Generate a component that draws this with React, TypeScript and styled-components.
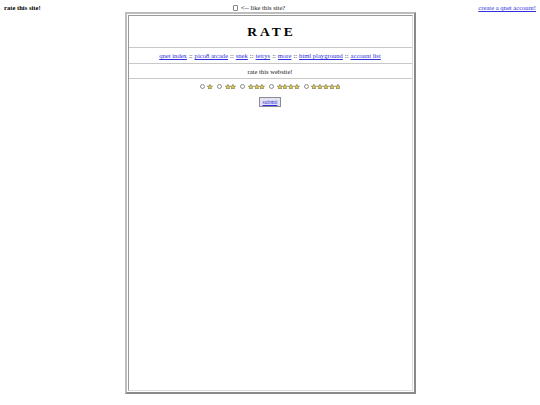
import React from "react";
import styled, { createGlobalStyle } from "styled-components";

const Global = createGlobalStyle`
  html, body { margin: 0; padding: 0; background: #fff; }
  body {
    padding: 4px;
    font-family: "Liberation Serif", "Times New Roman", serif;
    font-size: 6.6px;
    color: #1a1a1a;
  }
  a { color: #3030dd; text-decoration: underline; }
`;

const TopBar = styled.div`
  display: grid;
  grid-template-columns: 1fr auto 1fr;
  align-items: center;
  height: 8px;
  line-height: 8px;
`;

const SiteTitle = styled.b`
  font-weight: bold;
  justify-self: start;
  color: #000;
`;

const LikeLabel = styled.label`
  display: flex;
  align-items: center;
  gap: 2.5px;
  justify-self: center;
  margin-left: -22px;
`;

const Check = styled.input`
  appearance: none;
  width: 5.5px;
  height: 5.5px;
  margin: 0;
  border: 0.6px solid #858585;
  border-radius: 1px;
  background: #fff;
`;

const AccountLink = styled.a`
  justify-self: end;
`;

const Frame = styled.div`
  width: 291px;
  height: 382px;
  margin: 0 auto;
  box-sizing: border-box;
  border: 2px solid;
  border-color: #bdbdbd #8a8a8a #8a8a8a #bdbdbd;
  padding: 1px;
  display: flex;
`;

const Inner = styled.div`
  flex: 1;
  border: 1px solid;
  border-color: #9a9a9a #dcdcdc #dcdcdc #9a9a9a;
  display: flex;
  flex-direction: column;
`;

const Row = styled.div<{ $h: number; $line?: boolean }>`
  height: ${(p) => p.$h}px;
  flex: none;
  display: flex;
  align-items: center;
  justify-content: center;
  border-top: ${(p) => (p.$line ? "1px solid #c8c8c8" : "none")};
  box-sizing: border-box;
`;

const Filler = styled.div`
  flex: 1;
  display: flex;
  justify-content: center;
  align-items: flex-start;
  padding-top: 3px;
`;

const Heading = styled.h1`
  margin: 0;
  font-size: 13.5px;
  font-weight: bold;
  letter-spacing: 3px;
  margin-right: -3px;
  color: #000;
`;

const Nav = styled.nav`
  display: flex;
  gap: 2px;
  white-space: pre;
`;

const RatingList = styled.div`
  display: flex;
  align-items: center;
  gap: 4px;
`;

const Option = styled.label`
  display: flex;
  align-items: center;
  gap: 2.6px;
`;

const Radio = styled.input`
  appearance: none;
  width: 5px;
  height: 5px;
  margin: 0;
  border: 0.6px solid #8a8a8a;
  border-radius: 50%;
  background: #fff;
`;

const Stars = styled.span`
  display: flex;
`;

const SubmitButton = styled.button`
  font-family: "Liberation Serif", "Times New Roman", serif;
  font-size: 5.5px;
  color: #3030dd;
  text-decoration: underline;
  text-decoration-thickness: 0.5px;
  background: #e4e4ee;
  border: 0.8px solid #8a8a9a;
  padding: 1px 3px;
  height: 10px;
  line-height: 7px;
`;

const Star: React.FC = () => (
  <svg width="5.8" height="5.8" viewBox="0 0 24 24">
    <polygon
      points="12,1.5 15,8.8 22.8,9.2 16.8,14.3 18.8,22 12,17.8 5.2,22 7.2,14.3 1.2,9.2 9,8.8"
      fill="#e8d350"
      stroke="#5a5530"
      strokeWidth="2.2"
      strokeLinejoin="round"
    />
  </svg>
);

const links = [
  "qnet index",
  "pico8 arcade",
  "snek",
  "tetrys",
  "more",
  "html playground",
  "account list",
];

export default function App() {
  return (
    <>
      <Global />
      <TopBar>
        <SiteTitle>rate this site!</SiteTitle>
        <LikeLabel>
          <Check type="checkbox" />
          <span>&lt;-- like this site?</span>
        </LikeLabel>
        <AccountLink href="#">create a qnet account!</AccountLink>
      </TopBar>
      <Frame>
        <Inner>
          <Row $h={31}>
            <Heading>RATE</Heading>
          </Row>
          <Row $h={16} $line>
            <Nav>
              {links.map((l, i) => (
                <React.Fragment key={l}>
                  {i > 0 && <span>::</span>}
                  <a href="#">{l}</a>
                </React.Fragment>
              ))}
            </Nav>
          </Row>
          <Row $h={15} $line>
            rate this website!
          </Row>
          <Row $h={16} $line>
            <RatingList>
              {[1, 2, 3, 4, 5].map((n) => (
                <Option key={n}>
                  <Radio type="radio" name="rating" value={n} />
                  <Stars>
                    {Array.from({ length: n }).map((_, i) => (
                      <Star key={i} />
                    ))}
                  </Stars>
                </Option>
              ))}
            </RatingList>
          </Row>
          <Filler>
            <SubmitButton>submit</SubmitButton>
          </Filler>
        </Inner>
      </Frame>
    </>
  );
}
